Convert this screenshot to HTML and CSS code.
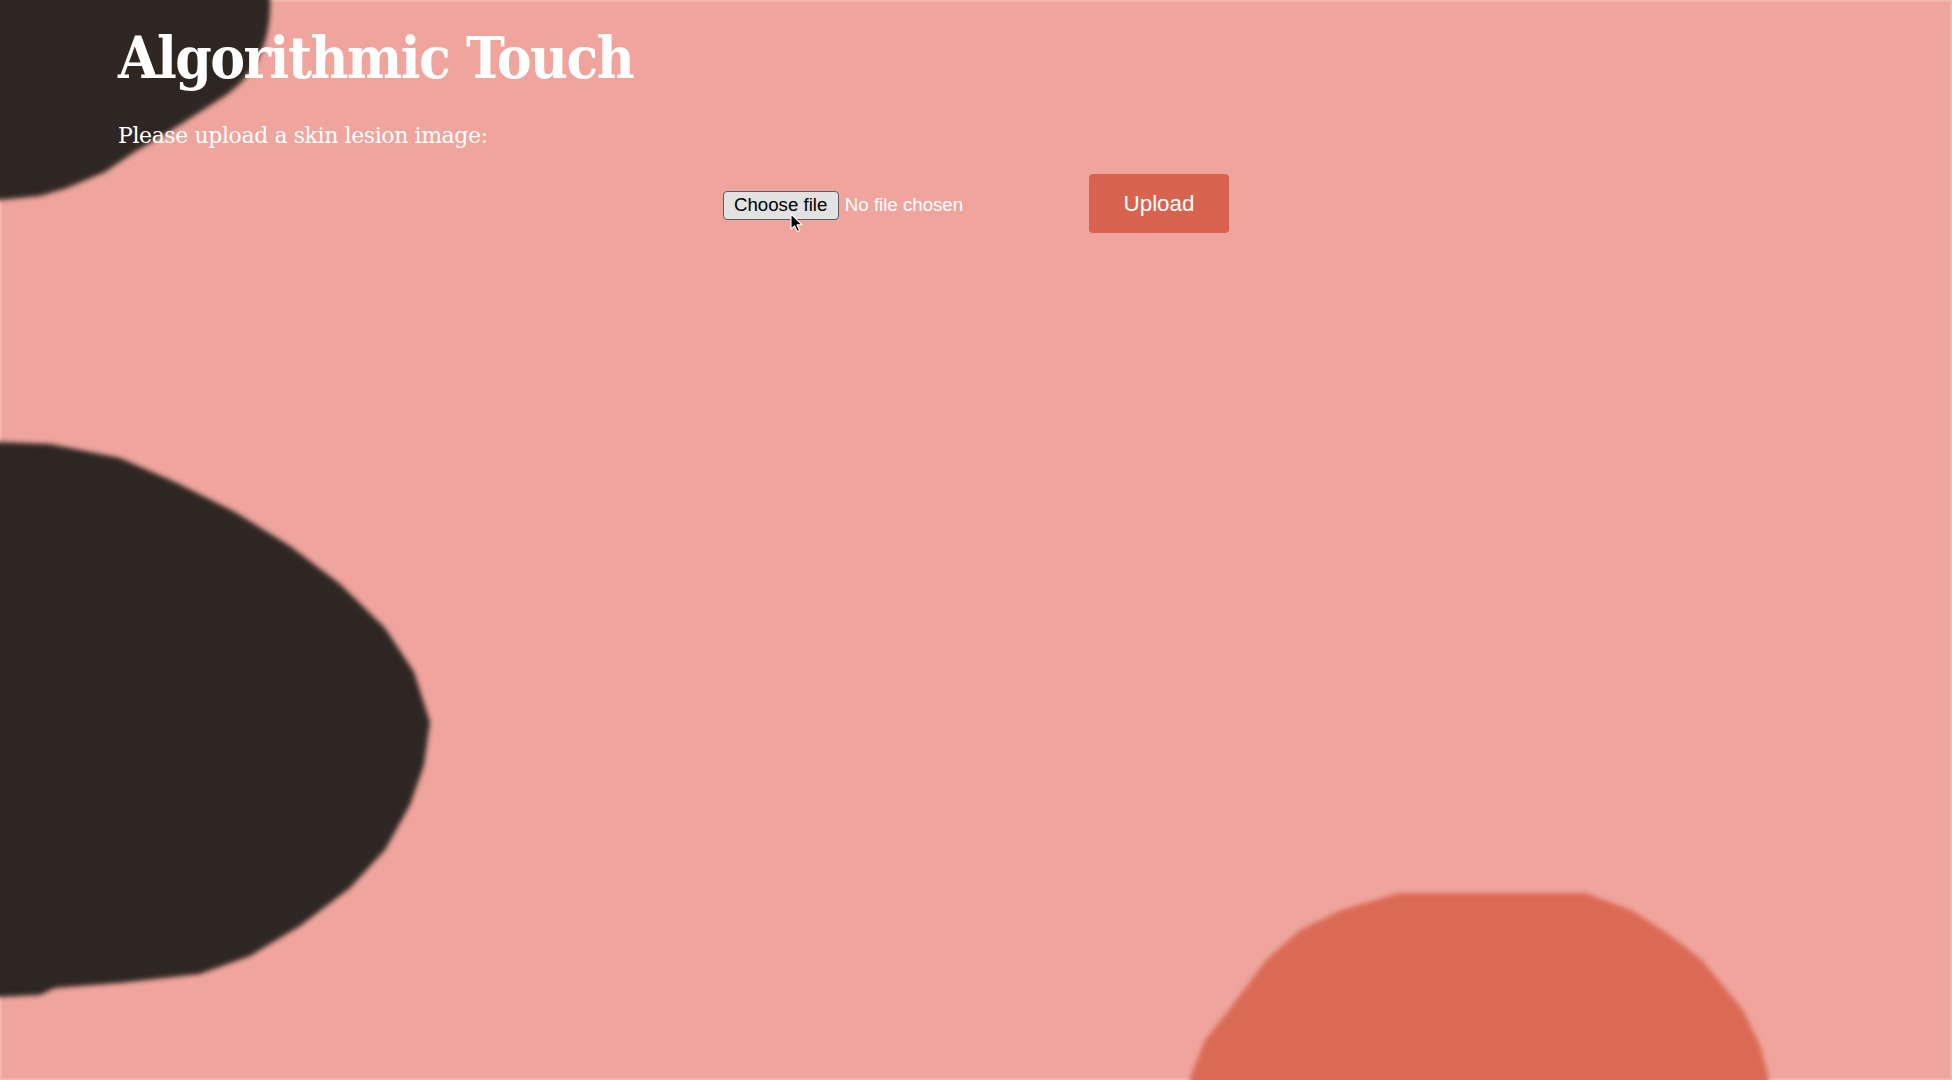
FILE: index.html
```html
<!DOCTYPE html>
<html lang="en">
<head>
<meta charset="utf-8">
<title>Algorithmic Touch</title>
<link rel="stylesheet" href="styles.css">
</head>
<body>
<div class="backdrop" aria-hidden="true">
  <svg class="blobs" width="1952" height="1080" viewBox="0 0 1952 1080">
    <defs>
      <filter id="soft" x="-5%" y="-5%" width="110%" height="110%">
        <feGaussianBlur stdDeviation="2.8"/>
      </filter>
    </defs>
    <path class="blob-dark" filter="url(#soft)" d="M-10,-10 L270,-10 L270,0 C271,25 265,50 253,67 C245,80 238,86 225,96 L200,112 L167,133 L133,153 L105,172 L67,188 L40,196 L0,200 L-10,200 Z"/>
    <path class="blob-dark" filter="url(#soft)" d="M-10,442 L0,442 L50,444 L120,458 L175,482 L235,512 L290,546 L340,584 L385,628 L414,672 L430,722 L424,765 L410,805 L385,850 L350,888 L300,926 L250,956 L200,974 L120,983 L55,988 L40,995 L0,997 L-10,997 Z"/>
    <path class="blob-orange" filter="url(#soft)" d="M1188,1090 L1191,1075 L1205,1040 L1229,1010 L1266,960 L1300,930 L1341,910 L1399,893 L1586,893 L1631,910 L1670,935 L1702,960 L1743,1010 L1760,1045 L1768,1075 L1770,1090 Z"/>
  </svg>
</div>

<main class="page">
  <header class="intro">
    <h1 class="title">Algorithmic Touch</h1>
    <p class="prompt">Please upload a skin lesion image:</p>
  </header>

  <form class="upload-form" action="#" method="post" enctype="multipart/form-data">
    <label class="file-field">
      <input class="file-input" type="file" name="file" accept="image/*">
      <span class="choose">Choose file
        <svg class="cursor" width="13" height="20" viewBox="0 0 13 20" aria-hidden="true">
          <path d="M1,1 L1,16 L4.6,12.8 L7.2,18.6 L9.6,17.6 L7,11.9 L11.8,11.6 Z" fill="#000" stroke="#fff" stroke-width="1.1" stroke-linejoin="round"/>
        </svg>
      </span>
      <span class="file-name">No file chosen</span>
    </label>
    <button class="upload-btn" type="submit">Upload</button>
  </form>
</main>
</body>
</html>
```

FILE: styles.css
```css
* {
  box-sizing: border-box;
}

html,
body {
  margin: 0;
  padding: 0;
}

body {
  position: relative;
  width: 1952px;
  height: 1080px;
  overflow: hidden;
  background: #efa59d;
  color: #ffffff;
  font-family: "DejaVu Serif", serif;
}

.backdrop {
  position: absolute;
  inset: 0;
  z-index: 0;
  box-shadow: inset 0 0 0 2px rgba(255, 255, 255, 0.18);
}

.blobs {
  display: block;
}

.blob-dark {
  fill: #2e2724;
}

.blob-orange {
  fill: #db6b55;
}

.page {
  position: relative;
  z-index: 1;
}

.intro {
  padding-left: 118px;
}

.title {
  margin: 23px 0 0;
  font-family: "DejaVu Serif Condensed", "DejaVu Serif", serif;
  font-stretch: condensed;
  font-weight: bold;
  font-size: 58px;
  line-height: 70px;
  letter-spacing: -1.5px;
}

.prompt {
  margin: 29px 0 0;
  font-family: "DejaVu Serif", serif;
  font-size: 22px;
  line-height: 27px;
  letter-spacing: -0.4px;
}

.upload-form {
  display: flex;
  justify-content: center;
  align-items: baseline;
  margin-top: 25px;
}

.file-field {
  display: inline-flex;
  align-items: baseline;
  width: 352px;
  font-family: "Liberation Sans", Arial, sans-serif;
  font-size: 18.67px;
  cursor: default;
}

.file-input {
  display: none;
}

.choose {
  position: relative;
  display: inline-block;
  padding: 3.5px 10.5px;
  border: 1.5px solid #5c5c5c;
  border-radius: 4px;
  background: #e2e2e2;
  color: #000000;
  line-height: 20px;
  white-space: nowrap;
}

.cursor {
  position: absolute;
  left: 66px;
  top: 21px;
}

.file-name {
  margin-left: 6px;
  color: #ffffff;
  line-height: 20px;
  white-space: nowrap;
}

.upload-btn {
  margin-left: 14px;
  padding: 16px 35px;
  border: none;
  border-radius: 4px;
  background: #d8644f;
  color: #ffffff;
  font-family: "Liberation Sans", Arial, sans-serif;
  font-size: 22.4px;
  line-height: 27px;
  cursor: pointer;
}
```
